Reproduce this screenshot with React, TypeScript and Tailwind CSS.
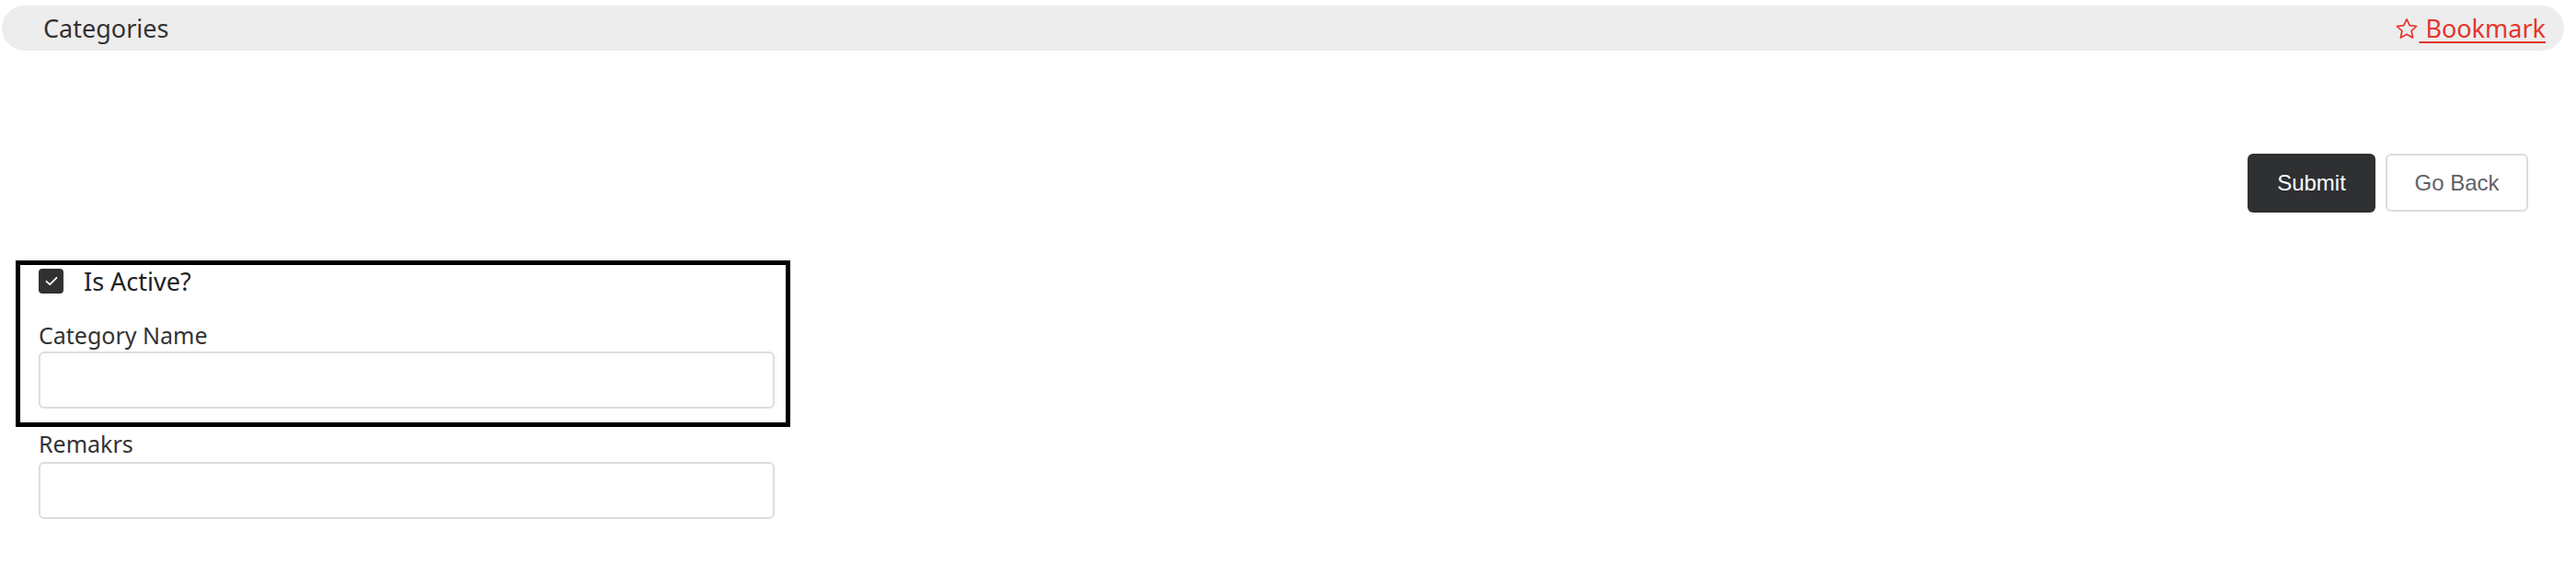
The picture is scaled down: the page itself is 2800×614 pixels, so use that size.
import React from 'react';

const avenir = { fontFamily: '"Noto Sans", Lato, sans-serif' };

function StarIcon() {
  return (
    <svg width="26" height="24" viewBox="0 0 26 24" fill="none" className="shrink-0">
      <path
        d="M13 1.8 L16.2 8.6 L23.6 9.5 L18.1 14.6 L19.6 22 L13 18.3 L6.4 22 L7.9 14.6 L2.4 9.5 L9.8 8.6 Z"
        stroke="#e5352b"
        strokeWidth="1.7"
        strokeLinejoin="round"
      />
    </svg>
  );
}

function CheckBox() {
  return (
    <span className="flex h-[27px] w-[27px] items-center justify-center rounded-[4px] bg-[#303133]">
      <svg width="16" height="13" viewBox="0 0 16 13" fill="none">
        <path d="M2.5 6.8 L6.2 10.2 L13.5 2.8" stroke="#fff" strokeWidth="1.8" strokeLinecap="round" strokeLinejoin="round" />
      </svg>
    </span>
  );
}

export default function App() {
  return (
    <div className="min-h-[614px] w-[2800px] bg-white text-[#333]" style={avenir}>
      {/* breadcrumb bar */}
      <div className="pl-[2px] pr-[13px] pt-[6px]">
        <div className="flex h-[49px] items-center justify-between rounded-full bg-[#ededed] pl-[45px] pr-[20px]">
          <span className="text-[27px] leading-none text-[#333]">Categories</span>
          <a href="#" className="flex items-center text-[27px] leading-none text-[#e5352b] underline decoration-[2px] underline-offset-[4px]">
            <StarIcon />
            <span>&nbsp;Bookmark</span>
          </a>
        </div>
      </div>

      {/* actions */}
      <div className="mt-[112px] flex justify-end gap-[11px] pr-[52px]" style={{ fontFamily: '"Liberation Sans", Arial, sans-serif' }}>
        <button className="h-[64px] w-[139px] rounded-[6px] bg-[#2f3032] text-[24px] text-white">Submit</button>
        <button className="h-[63px] w-[155px] rounded-[6px] border-2 border-[#dcdce0] bg-white text-[24px] text-[#606266]">Go Back</button>
      </div>

      {/* form */}
      <div className="mt-[52px] ml-[17px] w-[842px] border-[5px] border-black pb-[15px] pl-[20px] pr-[12px]">
        <label className="flex h-[34px] items-center gap-[22px]">
          <CheckBox />
          <span className="text-[27px] leading-none text-[#222]">Is Active?</span>
        </label>
        <div className="mt-[24px] h-[36px] text-[25px] leading-[36px]">Category Name</div>
        <input className="block h-[62px] w-full rounded-[6px] border-2 border-[#dcdce0] bg-white px-3 outline-none" />
      </div>
      <div className="ml-[42px] w-[800px]">
        <div className="h-[38px] text-[25px] leading-[36px]">Remakrs</div>
        <input className="block h-[62px] w-full rounded-[6px] border-2 border-[#dcdce0] bg-white px-3 outline-none" />
      </div>
    </div>
  );
}
